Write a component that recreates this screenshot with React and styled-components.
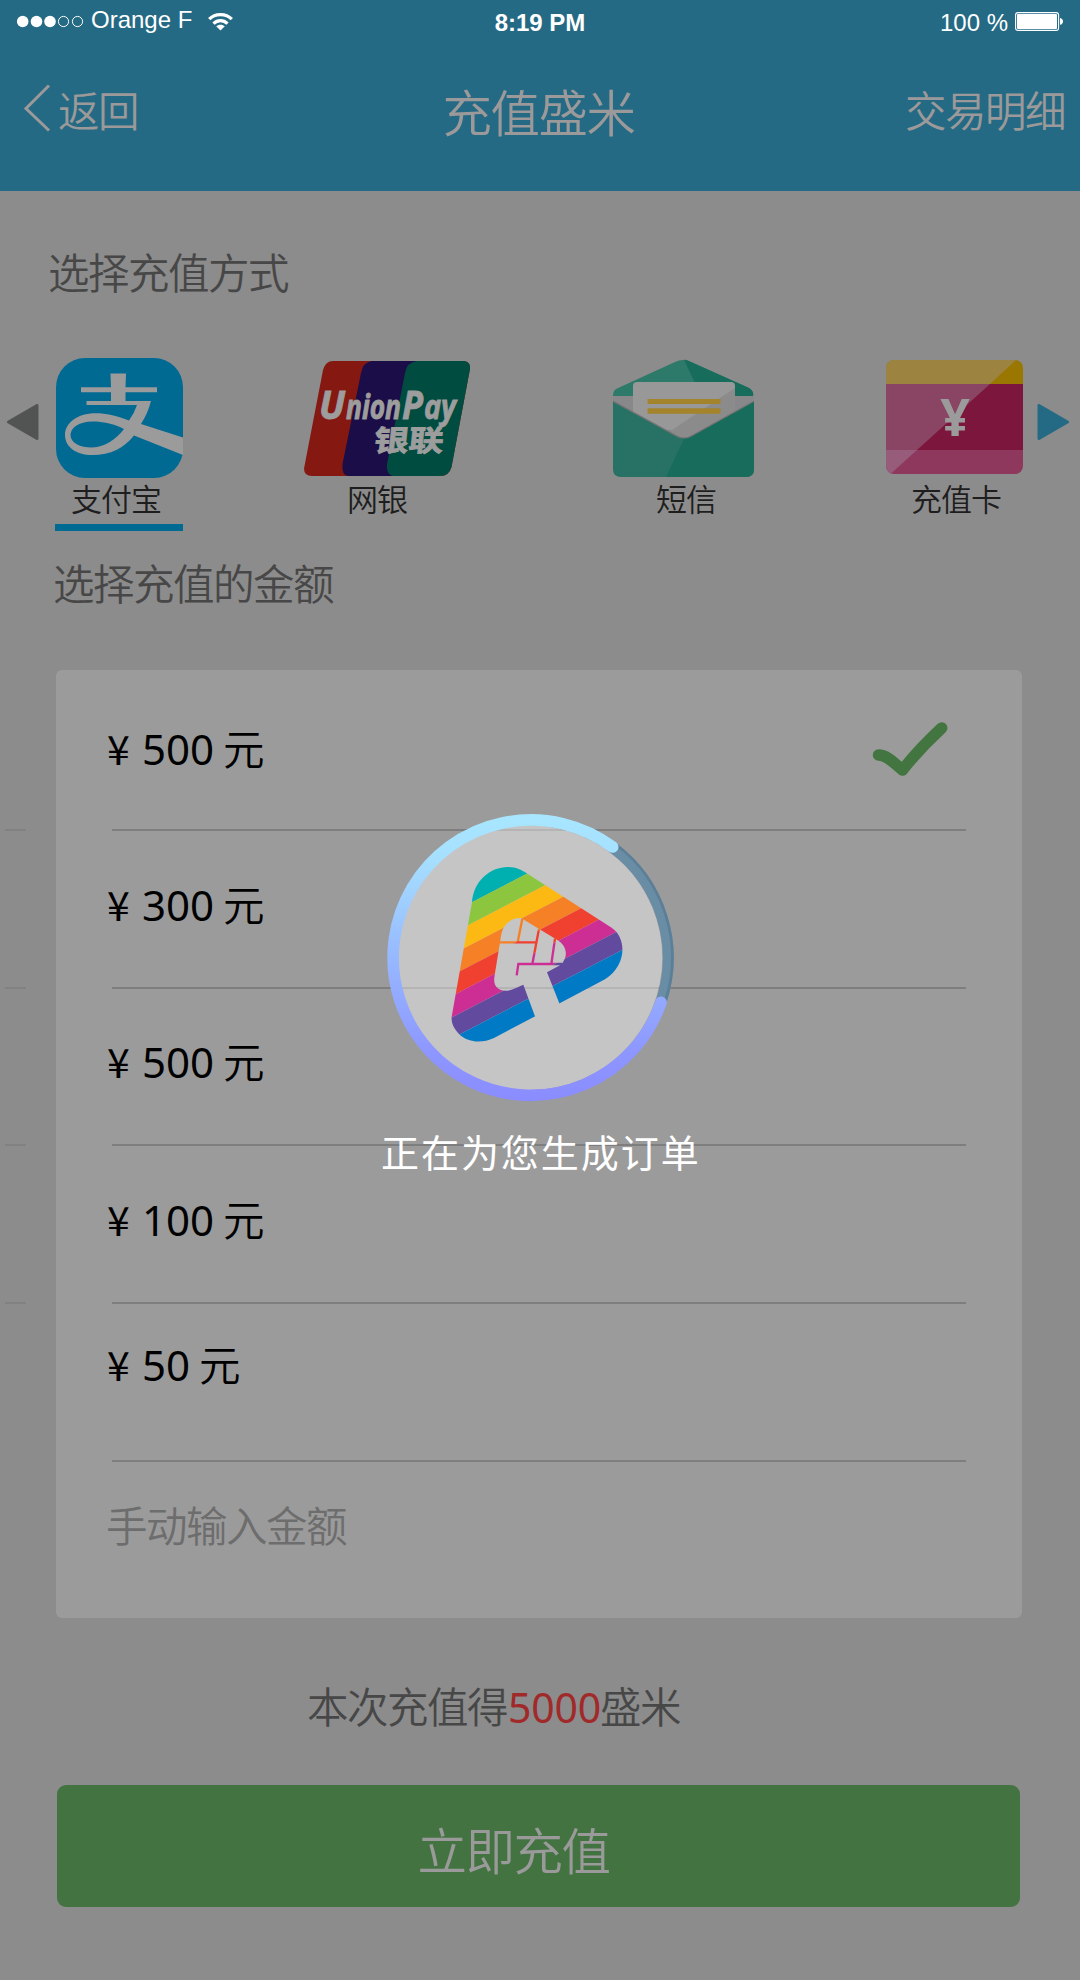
import React from 'react';
import styled, { createGlobalStyle } from 'styled-components';

const cjk = '"Noto Sans CJK SC", sans-serif';
const latin = '"Noto Sans", "Noto Sans CJK SC", sans-serif';
const system = '"Liberation Sans", Arial, sans-serif';

const Global = createGlobalStyle`
  * { box-sizing: border-box; }
  body { margin: 0; background: #8c8c8c; font-family: ${cjk}; }
  svg { display: block; flex: none; }
`;

const Screen = styled.div`
  position: relative;
  display: flex;
  flex-direction: column;
  width: 1080px;
  height: 1980px;
  overflow: hidden;
  background: #8c8c8c;
`;

const Header = styled.header`
  height: 191px;
  background: #256a84;
`;

const StatusBar = styled.div`
  display: grid;
  grid-template-columns: 1fr auto 1fr;
  height: 44px;
  padding: 0 17px;
  color: #fff;
  font: 24px/28px ${system};
`;

const StatusLeft = styled.div`
  display: flex;
  align-items: flex-start;
  padding-top: 5px;
`;

const Carrier = styled.span`
  margin: 1px 15px 0 7px;
`;

const Clock = styled.span`
  padding-top: 9px;
  font-weight: 700;
`;

const StatusRight = styled.div`
  display: flex;
  justify-content: flex-end;
  gap: 7px;
  padding-top: 8px;
`;

const Percent = styled.span`
  padding-top: 1px;
`;

const Nav = styled.nav`
  display: grid;
  grid-template-columns: 1fr auto 1fr;
  align-items: start;
  height: 147px;
  padding: 40px 15px 0 23px;
  color: #9b9999;
`;

const NavLink = styled.a`
  display: flex;
  align-items: flex-start;
  justify-content: ${(p) => (p.$end ? 'flex-end' : 'flex-start')};
  gap: 7px;
  padding-top: 5px;
  font-size: 41.5px;
  line-height: 40px;
  letter-spacing: -1.5px;
  font-weight: 350;

  svg { margin-top: -5px; }
`;

const Title = styled.h1`
  margin: 0;
  padding: 3px 11px 0 0;
  font-size: 49.5px;
  line-height: 48px;
  letter-spacing: -1.5px;
  font-weight: 350;
`;

const SectionTitle = styled.h2`
  margin: ${(p) => p.$top}px 0 0 ${(p) => p.$left}px;
  font-size: 41.5px;
  line-height: 40px;
  letter-spacing: -1.5px;
  font-weight: 350;
  color: #474747;
`;

const Methods = styled.div`
  display: flex;
  align-items: flex-start;
  height: 173px;
  margin-top: 67px;
  padding-left: 7px;
`;

const Arrow = styled.div`
  padding: 46px 0 0 ${(p) => p.$gap || 0}px;
`;

const Method = styled.div`
  width: ${(p) => p.$width}px;
  margin-left: ${(p) => p.$gap}px;
  border-bottom: ${(p) => (p.$active ? '7px solid #006a93' : '0')};
  padding-bottom: 11px;
`;

const MethodLabel = styled.div`
  padding-left: ${(p) => p.$indent}px;
  margin-top: 5px;
  font-size: 31px;
  line-height: 30px;
  letter-spacing: -1px;
  font-weight: 350;
  white-space: nowrap;
  color: #1e1e1e;
`;

const AmountArea = styled.div`
  display: flex;
  margin-top: 68px;
`;

const Ticks = styled.div`
  width: 56px;
  padding-left: 5px;
`;

const Tick = styled.div`
  width: 21px;
  height: ${(p) => p.$height}px;
  border-bottom: 2px solid #818181;
`;

const AmountCard = styled.div`
  width: 966px;
  height: 948px;
  padding: 0 56px;
  border-radius: 6px;
  background: #9b9b9b;
`;

const AmountRow = styled.div`
  display: flex;
  justify-content: space-between;
  align-items: flex-start;
  height: ${(p) => p.$height}px;
  padding-top: ${(p) => p.$top}px;
  border-bottom: 2px solid #7e7e7e;
`;

const Amount = styled.div`
  display: flex;
  align-items: baseline;
  margin: -1px 0 0 -5px;
  font: 42px/42px ${latin};
  color: #000;
`;

const Yen = styled.span`
  width: 35px;
  font: 400 41px/42px ${cjk};
`;

const Unit = styled.span`
  margin-left: 9px;
  font: 350 41.5px/42px ${cjk};
`;

const CheckSlot = styled.div`
  margin: -6px 18px 0 0;
`;

const ManualInput = styled.div`
  margin-left: -6px;
  padding-top: 42px;
  font-size: 41.5px;
  line-height: 40px;
  letter-spacing: -1.5px;
  font-weight: 350;
  color: #6d6d6d;
`;

const Summary = styled.p`
  display: flex;
  align-items: baseline;
  margin: 66px 0 0 307px;
  height: 45px;
  font: 350 41.5px/42px ${cjk};
  letter-spacing: -1.5px;
  color: #474747;
`;

const Points = styled.span`
  margin: 0 -1px 0 1px;
  font: 41px/42px ${latin};
  letter-spacing: -0.2px;
  color: #a02a2a;
`;

const SubmitButton = styled.button`
  width: 963px;
  height: 122px;
  margin: 56px 0 0 57px;
  padding: 5px 50px 0 0;
  border: 0;
  border-radius: 9px;
  background: #427340;
  color: #9a9a9a;
  font: 350 49.5px/48px ${cjk};
  letter-spacing: -1.5px;
`;

const LoadingLayer = styled.div`
  position: absolute;
  inset: 0;
  display: flex;
  flex-direction: column;
  align-items: flex-start;
  padding: 810px 0 0 382px;
`;

const LoadingText = styled.div`
  margin: 25px 0 0 -1px;
  font-size: 38px;
  line-height: 40px;
  letter-spacing: 1.95px;
  white-space: nowrap;
  color: #fff;
`;

const Signal = () => (
  <svg width="67" height="28" viewBox="0 0 67 28">
    {[5.7, 19.5, 33].map((x) => (
      <circle key={x} cx={x} cy="16.5" r="5.8" fill="#fff" />
    ))}
    {[46.5, 60.5].map((x) => (
      <circle key={x} cx={x} cy="16.5" r="5.1" fill="none" stroke="#fff" strokeWidth="1" />
    ))}
  </svg>
);

const Wifi = () => (
  <svg width="27" height="28" viewBox="0 0 27 28" fill="none" stroke="#fff" strokeWidth="3.2">
    <path d="M2.2 14.2 C8 8 19 8 24.8 14.2" />
    <path d="M6.5 18.6 C10.5 14.6 16.5 14.6 20.5 18.6" />
    <path d="M9.2 21.3 C11.5 19.2 15.5 19.2 17.8 21.3 L13.5 25.6 Z" fill="#fff" stroke="none" />
  </svg>
);

const Battery = () => (
  <svg width="48" height="24" viewBox="0 0 48 24">
    <rect x="0.6" y="4.6" width="43" height="17.8" rx="2.5" fill="none" stroke="#fff" strokeWidth="1.1" />
    <rect x="2" y="6" width="40" height="15" rx="1" fill="#fff" />
    <path d="M45 10 C49 10.8 49 16 45 16.8 Z" fill="#fff" />
  </svg>
);

const BackChevron = () => (
  <svg width="28" height="50" viewBox="0 0 28 50" fill="none" stroke="#9b9999" strokeWidth="3">
    <path d="M26 1.5 L3 24.5 L26 46.5" />
  </svg>
);

const ArrowLeft = () => (
  <svg width="32" height="36" viewBox="0 0 32 36">
    <path d="M30 1.5 V34.5 L1.5 18 Z" fill="#525453" stroke="#525453" strokeWidth="3" strokeLinejoin="round" />
  </svg>
);

const ArrowRight = () => (
  <svg width="32" height="36" viewBox="0 0 32 36">
    <path d="M2 1.5 V34.5 L30.5 18 Z" fill="#256a84" stroke="#256a84" strokeWidth="3" strokeLinejoin="round" />
  </svg>
);

const AlipayIcon = () => (
  <svg width="128" height="120" viewBox="-1 0 128 120">
    <rect width="127" height="120" rx="29" fill="#006a93" />
    <path fill="#9b9b9b" d="M54.5 15.5 H70 L69.500 29.3 H101 V34.3 H69.500 V43 H95 Q92 55 85 66 L127 79.5 V97 L78 77.5 C68 90 55 97 36 97 C20 97 9 89 9 77 C9 66 20 55.3 40 55.3 C50 55.3 60 57.5 73 62.5 Q78 56 81 47 H30.5 V43 H55 V34.3 H25 V29.3 H55 Z" />
    <path d="M68 71 C57 65.5 47 63.5 37 63.5 C22 63.5 14.5 70 14.5 77 C14.5 85 24 89.5 36 89.5 C50 89 60 81 68 71 Z" fill="#006a93" />
  </svg>
);

const wordmark = [
  { part: 'U', x: 15, size: 40, width: 26 },
  { part: 'nion', x: 42, size: 34, width: 55 },
  { part: 'P', x: 98, size: 40, width: 21 },
  { part: 'ay', x: 120, size: 34, width: 32 },
];

const UnionPayIcon = () => (
  <svg width="166" height="120" viewBox="0 -3 166 120">
    <clipPath id="up">
      <path d="M29 0 H158 Q167.500 0 165.800 9 L147.500 106 Q145 115 136 115 H8 Q-1.200 115 0.300 106 L19 9 Q21.500 0 29 0 Z" />
    </clipPath>
    <g clipPath="url(#up)">
      <rect width="167" height="115" fill="#851912" />
      <path d="M68 0 Q59 1 57 12 L38.500 103 Q37.500 114 44 115 H120 V0 Z" fill="#1b0d47" />
      <path d="M113 0 Q103 1 101 12 L83 103 Q82 114 89 115 H170 V0 Z" fill="#004c40" />
    </g>
    <g fill="#9d9d9d" stroke="#9d9d9d" strokeWidth="0.9">
      {wordmark.map(({ part, x, size, width }) => (
        <text key={part} x={x} y="58" fontFamily='"Open Sans", "Noto Sans", sans-serif' fontSize={size} fontWeight="700" fontStyle="italic" textLength={width} lengthAdjust="spacingAndGlyphs">
          {part}
        </text>
      ))}
      <text transform="translate(69 89.500) skewX(-6) scale(1.200 1)" fontFamily='"Noto Sans CJK SC", sans-serif' fontSize="29" fontWeight="700">银联</text>
    </g>
  </svg>
);

const EnvelopeIcon = () => (
  <svg width="141" height="120" viewBox="0 -2 141 120">
    <path d="M3 29 L62 2 Q70 -2 78 2 L136 28 Q141 31 140 36 H0 Q0 31 3 29 Z" fill="#2d796a" />
    <path d="M71 -0.500 Q75 0 78 2 L136 28 Q141 31 140 36 H88 Z" fill="#186c5c" />
    <path d="M0 36 H141 V43 L71 82 L0 43 Z" fill="#88888a" />
    <path d="M20 70 V26 Q20 22 24 22 H118 Q122 22 122 26 V70 Z" fill="#989898" />
    <path d="M122 28 L56 72 L71 82 L122 70 Z" fill="#8b8b8b" />
    <path d="M34.500 39 H107.500 V44 H34.500 Z M34.500 48.300 H107.500 V53.700 H34.500 Z" fill="#a3842c" />
    <path d="M0 44 V42 L64 77 Q71 81 78 77 L141 42 V109 Q141 117 133 117 H8 Q0 117 0 109 Z" fill="#737373" transform="translate(0 -1.500)" />
    <path d="M0 42 L64 77 Q71 80 78 77 L141 42 V109 Q141 117 133 117 H8 Q0 117 0 109 Z" fill="#277264" />
    <path d="M71 79 Q75 79 78 77 L141 42 V109 Q141 117 133 117 H53 Z" fill="#186c5c" />
  </svg>
);

const VoucherIcon = () => (
  <svg width="137" height="120" viewBox="0 -2 137 120">
    <clipPath id="vc">
      <rect width="137" height="114" rx="8" />
    </clipPath>
    <g clipPath="url(#vc)">
      <rect width="137" height="24" fill="#997700" />
      <rect y="24" width="137" height="66" fill="#7c163c" />
      <rect y="90" width="137" height="24" fill="#8e385e" />
      <path d="M0 0 H130 L104 24 H0 Z" fill="#9c8440" />
      <path d="M0 24 H104 L31 90 H0 Z" fill="#8a4564" />
      <path d="M0 90 H31 L4.500 114 H0 Z" fill="#975c7a" />
    </g>
    <text x="69" y="76" textAnchor="middle" fontFamily='"Noto Sans", sans-serif' fontSize="52" fontWeight="700" fill="#9b9b9b">¥</text>
  </svg>
);

const CheckMark = () => (
  <svg width="76" height="56" viewBox="0 0 76 56" fill="none" stroke="#427540" strokeWidth="11.500" strokeLinecap="round" strokeLinejoin="round">
    <path d="M6.500 34 C15 34 22 42 30.500 49 Q47 28 69.700 7" />
  </svg>
);

const stripes = [
  ['#00afb0', 130, 236],
  ['#8cc63f', 236, 299],
  ['#fdb913', 299, 362],
  ['#f58025', 362, 424],
  ['#ef4030', 424, 486],
  ['#cc2e94', 486, 550],
  ['#624a9e', 550, 613],
  ['#007ac5', 613, 860],
];

// Stripe edges all fall by 0.52 per unit; their heights are given at x = 530.
const stripePath = (from, to) => {
  const rise = 0.52 * 330;
  return `M200 ${from + rise} L860 ${from - rise} V${to - rise} L200 ${to + rise} Z`;
};

const Loader = () => (
  <svg width="296" height="296" viewBox="66 60 888 888">
    <defs>
      <linearGradient id="ring" x1="0" y1="72" x2="0" y2="934" gradientUnits="userSpaceOnUse">
        <stop offset="0" stopColor="#a8e6ff" />
        <stop offset="0.15" stopColor="#a6e0ff" />
        <stop offset="0.5" stopColor="#97b8ff" />
        <stop offset="0.85" stopColor="#8d95ff" />
        <stop offset="1" stopColor="#8a8cff" />
      </linearGradient>
      <mask id="mark" maskUnits="userSpaceOnUse" x="200" y="150" width="700" height="700">
        <path fill="#fff" d="M275 680 L336 337 C340 275 388 231 445 231 C468 231 485 240 500 250 L755 413 C800 443 802 525 735 568 L402 744 C365 761 325 757 300 735 C283 719 273 700 275 680 Z" />
        <path fill="#000" d="M490 584 L466 595 C428 613 398 597 403 562 L423 438 C428 403 452 384 483 384 L587 447 C617 462 624 490 612 511 C609 519 604 524 596 528 L561 547 L598 640 L640 760 L540 720 Z" />
        <path fill="none" stroke="#fff" strokeWidth="7" d="M487 386 L473 457 M420 457 H528 M537 416 L517 522 M585 446 L574 522 M606 522 H475 L470 556" />
      </mask>
    </defs>
    <circle cx="510" cy="503" r="397" fill="#fff" fillOpacity="0.42" />
    <path d="M758 173 A413 413 0 0 1 903 637" fill="none" stroke="#6a8da6" strokeWidth="33" />
    <path d="M766 162 A425 425 0 0 1 915 637" fill="none" stroke="#5c7f97" strokeWidth="8" />
    <path d="M758 171 A413 413 0 1 0 903 637" fill="none" stroke="url(#ring)" strokeWidth="35" strokeLinecap="round" />
    <g mask="url(#mark)">
      {stripes.map(([color, from, to]) => (
        <path key={color} d={stripePath(from, to)} fill={color} />
      ))}
    </g>
  </svg>
);

const amounts = [
  { value: 500, height: 161, top: 57, checked: true },
  { value: 300, height: 158, top: 52 },
  { value: 500, height: 157, top: 51 },
  { value: 100, height: 158, top: 52 },
  { value: 50, height: 158, top: 39 },
];

export default function App() {
  return (
    <Screen>
      <Global />
      <Header>
        <StatusBar>
          <StatusLeft>
            <Signal />
            <Carrier>Orange F</Carrier>
            <Wifi />
          </StatusLeft>
          <Clock>8:19 PM</Clock>
          <StatusRight>
            <Percent>100 %</Percent>
            <Battery />
          </StatusRight>
        </StatusBar>
        <Nav>
          <NavLink>
            <BackChevron />
            返回
          </NavLink>
          <Title>充值盛米</Title>
          <NavLink $end>交易明细</NavLink>
        </Nav>
      </Header>

      <SectionTitle $top={60} $left={48}>选择充值方式</SectionTitle>
      <Methods>
        <Arrow><ArrowLeft /></Arrow>
        <Method $width={128} $gap={16} $active>
          <AlipayIcon />
          <MethodLabel $indent={16}>支付宝</MethodLabel>
        </Method>
        <Method $width={166} $gap={121}>
          <UnionPayIcon />
          <MethodLabel $indent={43}>网银</MethodLabel>
        </Method>
        <Method $width={141} $gap={143}>
          <EnvelopeIcon />
          <MethodLabel $indent={43}>短信</MethodLabel>
        </Method>
        <Method $width={137} $gap={132}>
          <VoucherIcon />
          <MethodLabel $indent={25}>充值卡</MethodLabel>
        </Method>
        <Arrow $gap={14}><ArrowRight /></Arrow>
      </Methods>

      <SectionTitle $top={31} $left={53}>选择充值的金额</SectionTitle>
      <AmountArea>
        <Ticks>
          {amounts.slice(0, 4).map((row, i) => (
            <Tick key={i} $height={row.height} />
          ))}
        </Ticks>
        <AmountCard>
          {amounts.map((row, i) => (
            <AmountRow key={i} $height={row.height} $top={row.top}>
              <Amount>
                <Yen>¥</Yen>
                {row.value}
                <Unit>元</Unit>
              </Amount>
              {row.checked && (
                <CheckSlot>
                  <CheckMark />
                </CheckSlot>
              )}
            </AmountRow>
          ))}
          <ManualInput>手动输入金额</ManualInput>
        </AmountCard>
      </AmountArea>

      <Summary>
        本次充值得<Points>5000</Points>盛米
      </Summary>
      <SubmitButton>立即充值</SubmitButton>

      <LoadingLayer>
        <Loader />
        <LoadingText>正在为您生成订单</LoadingText>
      </LoadingLayer>
    </Screen>
  );
}
